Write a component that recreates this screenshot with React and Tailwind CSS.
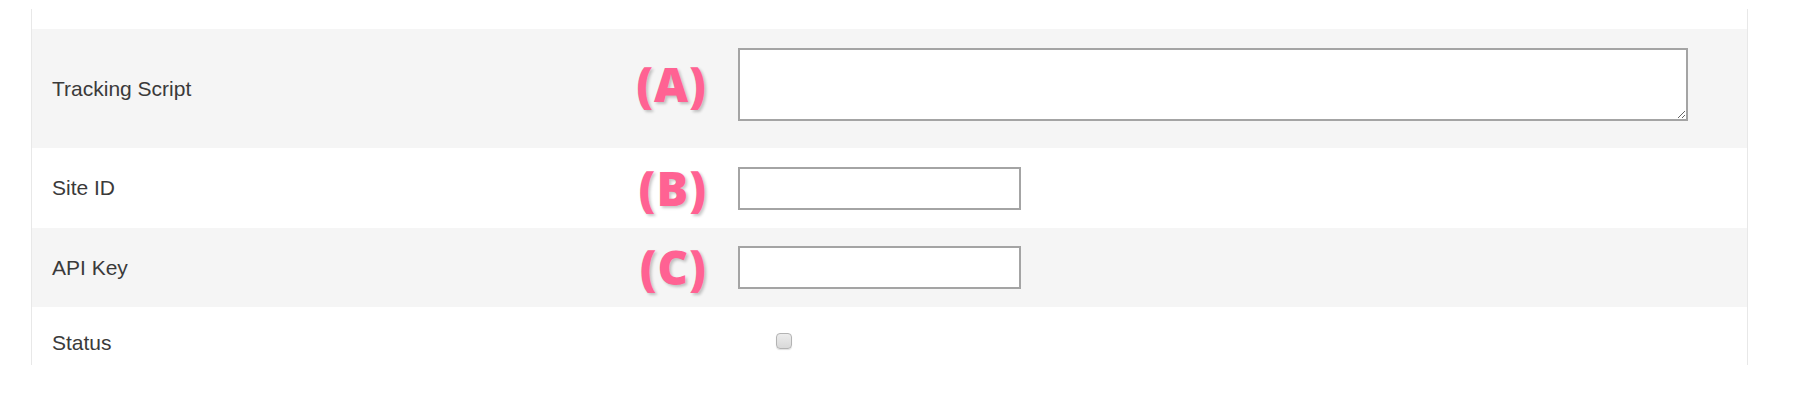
import React from 'react';

const Tag = ({ children }) => (
  <div
    className="w-[90px] text-right text-[47px] font-extrabold leading-none tracking-[1px] text-[#ff6293]"
    style={{ fontFamily: '"Open Sans", sans-serif', textShadow: '2px 2px 3px rgba(0,0,0,0.22)' }}
  >
    {children}
  </div>
);

const Label = ({ children }) => (
  <div className="w-[565px] self-center text-[21px] text-[#3a3a3a]">{children}</div>
);

const inputCls =
  'h-[43px] w-[283px] border-2 border-[#a4a4a4] bg-white outline-none';

const App = () => {
  return (
    <div className="w-[1798px] h-[409px] bg-white pt-[9px]" style={{ fontFamily: '"Liberation Sans", Arial, sans-serif' }}>
      <div className="ml-[31px] w-[1717px] h-[356px] overflow-hidden border-x border-[#e8e8e8] pt-5">
        {/* Tracking Script */}
        <div className="flex h-[119px] bg-[#f5f5f5] pl-5">
          <Label>Tracking Script</Label>
          <div className="flex items-center gap-[31px] self-start mt-[19px]">
            <Tag>(A)</Tag>
            <textarea className="block h-[73px] w-[950px] border-2 border-[#a4a4a4] bg-white outline-none" />
          </div>
        </div>

        {/* Site ID */}
        <div className="flex h-[80px] items-center bg-white pl-5">
          <Label>Site ID</Label>
          <div className="flex items-center gap-[31px]">
            <Tag>(B)</Tag>
            <input type="text" className={inputCls} />
          </div>
        </div>

        {/* API Key */}
        <div className="flex h-[79px] items-center bg-[#f5f5f5] pl-5">
          <Label>API Key</Label>
          <div className="flex items-center gap-[31px]">
            <Tag>(C)</Tag>
            <input type="text" className={inputCls} />
          </div>
        </div>

        {/* Status */}
        <div className="flex h-[72px] items-center bg-white pl-5">
          <Label>Status</Label>
          <div className="flex items-center pl-[159px] -mt-[4px]">
            <input
              type="checkbox"
              className="h-4 w-4 appearance-none rounded-[4px] border border-[#b3b3b3] bg-gradient-to-b from-[#ececec] to-[#d9d9d9] shadow-[0_1px_1px_rgba(0,0,0,0.12)]"
            />
          </div>
        </div>
      </div>
    </div>
  );
};

export default App;
